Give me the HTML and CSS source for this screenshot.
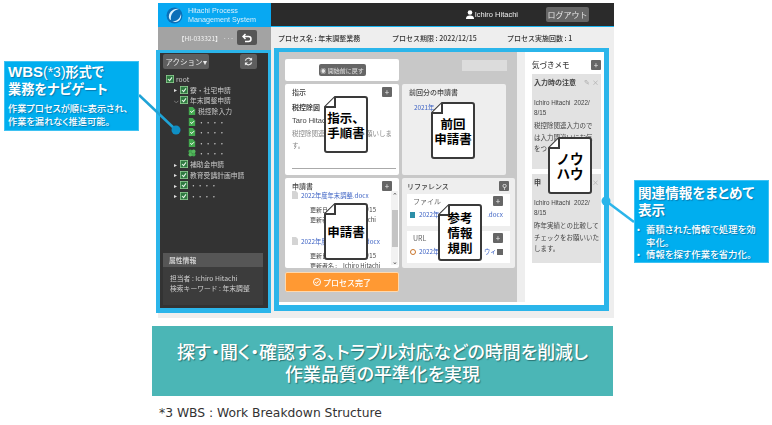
FILE: index.html
```html
<!doctype html>
<html lang="ja">
<head>
    <meta charset="UTF-8">
    <title>WBS</title>
    <link rel="stylesheet" href="styles.css">
</head>
<body>
<svg class="defs" width="0" height="0">
    <symbol id="folder" viewBox="0 0 10 10">
        <rect x="0.5" y="0.5" width="9" height="9" fill="#2f7a40" stroke="#8fd092" stroke-width="1"/>
        <path d="M2.5 5l2 2 3-4" fill="none" stroke="#e8f5e8" stroke-width="1.3"/>
    </symbol>
    <symbol id="page" viewBox="0 0 10 10">
        <path d="M1 0h5l3 3v7H1z" fill="#43a94f"/>
        <path d="M3 5l1.5 2 3-3" fill="none" stroke="#fff" stroke-width="1.2"/>
    </symbol>
    <symbol id="leaf" viewBox="0 0 10 10">
        <circle cx="3" cy="3" r="2.4" fill="#43a94f"/>
        <circle cx="7" cy="3" r="2.4" fill="#57b85f"/>
        <circle cx="3" cy="7" r="2.4" fill="#57b85f"/>
        <circle cx="7" cy="7" r="2.4" fill="#43a94f"/>
    </symbol>
    <symbol id="sheet" viewBox="0 0 44 57">
        <path d="M11 1H41q2 0 2 2V54q0 2-2 2H3q-2 0-2-2V11z" fill="#fff" stroke="#3a3a3a" stroke-width="2"/>
        <path d="M11 1V11H1" fill="#fff" stroke="#3a3a3a" stroke-width="2"/>
    </symbol>
    <symbol id="file" viewBox="0 0 6 8">
        <path d="M0 0h4l2 2v6H0z" fill="#d4d4d4"/>
    </symbol>
</svg>

<div class="page">
    <div class="app">
        <div class="left-col">
            <div class="brand">
                <svg class="brand-logo" width="17" height="17" viewBox="0 0 17 17">
                    <circle cx="8.5" cy="8.5" r="8" fill="#0b6fb8"/>
                    <path d="M3 11C2 6 7 1 13 2 8 3 4 7 5 13 4 13 3.500 12 3 11z" fill="#d9f2ff"/>
                    <path d="M6 14c4 1 8-2 9-7 1 5-3 10-9 7z" fill="#d9f2ff"/>
                </svg>
                <div class="brand-name">Hitachi Process<br>Management System</div>
            </div>
            <div class="case-bar">
                <span class="case-id">【HI-033321】 ···</span>
                <button class="back-btn">
                    <svg width="10" height="10" viewBox="0 0 10 10"><path d="M3.500 1L1 3.500 3.500 6M1.500 3.500H6.500a2.500 2.500 0 0 1 0 5H3" fill="none" stroke="#fff" stroke-width="1.500"/></svg>
                </button>
            </div>
            <div class="side">
                <div class="side-tools">
                    <button class="action-btn">アクション▾</button>
                    <button class="refresh-btn">
                        <svg width="9" height="9" viewBox="0 0 10 10"><path d="M1.500 4A3.600 3.600 0 0 1 8 3M8.500 6A3.600 3.600 0 0 1 2 7" fill="none" stroke="#eee" stroke-width="1.400"/><path d="M9 0.500V4H5.500zM1 9.500V6h3.500z" fill="#eee"/></svg>
                    </button>
                </div>
                <ul class="tree">
                    <li class="lv0"><svg class="ti"><use href="#folder"/></svg>root</li>
                    <li class="lv1"><i class="arrow">▸</i><svg class="ti"><use href="#folder"/></svg>寮・社宅申請</li>
                    <li class="lv1"><i class="arrow">⌵</i><svg class="ti"><use href="#folder"/></svg>年末調整申請</li>
                    <li class="lv2"><svg class="ti"><use href="#page"/></svg>税控除入力</li>
                    <li class="lv2"><svg class="ti"><use href="#page"/></svg>・・・・</li>
                    <li class="lv2"><svg class="ti"><use href="#page"/></svg>・・・・</li>
                    <li class="lv2"><svg class="ti"><use href="#page"/></svg>・・・・</li>
                    <li class="lv2"><svg class="ti"><use href="#leaf"/></svg>・・・・</li>
                    <li class="lv1"><i class="arrow">▸</i><svg class="ti"><use href="#folder"/></svg>補助金申請</li>
                    <li class="lv1"><i class="arrow">▸</i><svg class="ti"><use href="#folder"/></svg>教育受講計画申請</li>
                    <li class="lv1"><i class="arrow">▸</i><svg class="ti"><use href="#folder"/></svg>・・・・</li>
                    <li class="lv1"><i class="arrow">▸</i><svg class="ti"><use href="#folder"/></svg>・・・・</li>
                </ul>
                <div class="attr">
                    <div class="attr-head">属性情報</div>
                    <div class="attr-body">担当者 : Ichiro Hitachi<br>検索キーワード : 年末調整</div>
                </div>
            </div>
        </div>

        <div class="right-col">
            <div class="topbar">
                <span class="user">
                    <svg width="8" height="9" viewBox="0 0 8 9"><circle cx="4" cy="2.500" r="2.300" fill="#fff"/><path d="M0 9c0-3 2-3.500 4-3.500S8 6 8 9z" fill="#fff"/></svg>Ichiro Hitachi
                </span>
                <button class="logout">ログアウト</button>
            </div>
            <div class="procbar">
                <span class="proc-a">プロセス名 : 年末調整業務</span>
                <span class="proc-b">プロセス期限 : 2022/12/15</span>
                <span>プロセス実施回数 : 1</span>
            </div>
            <div class="main">
                <div class="board">
                    <div class="card back-card"><button class="restart">◉ 開始前に戻す</button></div>
                    <div class="ghost-cell"><div class="ghost"></div></div>

                    <div class="card">
                        <div class="card-head">指示<button class="plus">+</button></div>
                        <div class="task-name">税控除図</div>
                        <div class="task-user">Taro Hitac</div>
                        <div class="task-text split"><span>税控除関連</span><span>願いしま</span></div>
                        <div class="task-text">す。</div>
                        <div class="task-rule"></div>
                    </div>
                    <div class="card prev-card">
                        <div class="card-head">前回分の申請書</div>
                        <div class="link prev-link">2021年</div>
                    </div>

                    <div class="card form-card">
                        <div class="card-head">申請書<button class="plus">+</button></div>
                        <div class="form-wrap">
                            <div class="form-list">
                                <div class="link form-link"><svg class="fi"><use href="#file"/></svg>2022年度年末調整.docx</div>
                                <div class="meta split"><span>更新日</span><span>/15</span></div>
                                <div class="meta split"><span>更新者</span><span>chi</span></div>
                                <div class="link form-link link-next split"><span><svg class="fi"><use href="#file"/></svg>2022年度</span><span>.docx</span></div>
                                <div class="meta split"><span>更新日</span><span>/15</span></div>
                                <div class="meta">更新者名 :　Ichiro Hitachi</div>
                            </div>
                            <div class="scroll"><span>⌃</span><i class="thumb"></i><span>⌄</span></div>
                        </div>
                    </div>
                    <div class="card ref-card">
                        <div class="card-head">リファレンス<button class="plus search">⚲</button></div>
                        <div class="ref-box">
                            <div class="ref-title">ファイル<button class="plus">+</button></div>
                            <div class="link ref-link"><i class="dot-file"></i><span class="ref-a">2022年</span><span>.docx</span></div>
                        </div>
                        <div class="ref-box">
                            <div class="ref-title">URL<button class="plus">+</button></div>
                            <div class="link ref-link"><i class="dot-url"></i><span class="ref-a">2022年</span><span>ウィ</span><button class="mini"></button></div>
                        </div>
                    </div>

                    <button class="finish">
                        <svg width="8" height="8" viewBox="0 0 8 8"><circle cx="4" cy="4" r="3.500" fill="none" stroke="#fff"/><path d="M2.200 4l1.300 1.400 2.300-2.600" fill="none" stroke="#fff"/></svg>プロセス完了
                    </button>
                </div>
                <div class="strip"></div>
                <div class="memos">
                    <div class="memo-head">気づきメモ<button class="plus">+</button></div>
                    <div class="memo memo-one">
                        <div class="memo-title">入力時の注意<span class="memo-acts">✎ ×</span></div>
                        <div class="memo-by">Ichiro Hitachi&nbsp; 2022/<br>8/15</div>
                        <p class="memo-text">税控除関連入力ので<br>は入力間違いにお気<br>をつ</p>
                    </div>
                    <div class="memo memo-two">
                        <div class="memo-title">申<span class="memo-acts">×</span></div>
                        <div class="memo-by">Ichiro Hitachi&nbsp; 2022/<br>8/15</div>
                        <p class="memo-text">昨年実績との比較して<br>チェックをお願いいた<br>します。</p>
                    </div>
                </div>
            </div>
        </div>
    </div>

    <div class="banner">探す・聞く・確認する、トラブル対応などの時間を削減し<br>作業品質の平準化を実現</div>
    <div class="footnote">*3 WBS : Work Breakdown Structure</div>

    <!-- annotations over the screenshot -->
    <svg class="wires" width="772" height="425" viewBox="0 0 772 425">
        <path d="M139 95L176 130" stroke="#1fa3d6" stroke-width="2.500"/>
        <circle cx="176" cy="130" r="4.500" fill="#0f8fc4"/>
        <path d="M606 201L634 222" stroke="#2bb5ea" stroke-width="2.500"/>
        <circle cx="606" cy="201" r="4.500" fill="#2bb5ea"/>
    </svg>

    <div class="doc doc-guide"><svg><use href="#sheet"/></svg><b>指示、<br>手順書</b></div>
    <div class="doc doc-prev"><svg><use href="#sheet"/></svg><b>前回<br>申請書</b></div>
    <div class="doc doc-form"><svg><use href="#sheet"/></svg><b>申請書</b></div>
    <div class="doc doc-ref"><svg><use href="#sheet"/></svg><b>参考<br>情報<br>規則</b></div>
    <div class="doc doc-know"><svg><use href="#sheet"/></svg><b>ノウ<br>ハウ</b></div>

    <div class="callout callout-wbs">
        <div class="callout-title"><span class="latin">WBS</span><small>(*3)</small>形式で<br>業務をナビゲート</div>
        <p class="callout-text">作業プロセスが順に表示され、<br>作業を漏れなく推進可能。</p>
    </div>
    <div class="callout callout-info">
        <div class="callout-title">関連情報をまとめて<br>表示</div>
        <ul class="callout-list">
            <li>蓄積された情報で処理を効<br>率化。</li>
            <li>情報を探す作業を省力化。</li>
        </ul>
    </div>
</div>
</body>
</html>
```

FILE: styles.css
```css
html , body
{
    margin : 0px ;
    padding : 0px ;
    background : #fff ;
    font-family : "Noto Sans CJK JP" , "Liberation Sans" , sans-serif ;
}
button
{
    margin : 0px ;
    padding : 0px ;
    border : none ;
    font-family : inherit ;
}
ul , p
{
    margin : 0px ;
    padding : 0px ;
    list-style : none ;
}
.defs
{
    position : absolute ;
}
.page
{
    position : relative ;
    width : 772px ;
    height : 425px ;
    overflow : hidden ;
    padding-top : 3px ;
    box-sizing : border-box ;
}
.split
{
    display : flex ;
    justify-content : space-between ;
}

/* app screenshot */
.app
{
    display : flex ;
    width : 456px ;
    height : 315px ;
    margin-left : 158px ;
    background : #eee ;
    filter : blur(0.4px) ;
}
.left-col
{
    width : 113px ;
    flex : none ;
}
.right-col
{
    flex : 1 ;
    min-width : 0 ;
}
.brand
{
    display : flex ;
    align-items : center ;
    gap : 5px ;
    height : 24px ;
    padding-left : 8px ;
    background : #08a8f2 ;
}
.brand-logo
{
    flex : none ;
}
.brand-name
{
    color : #d8eefa ;
    font : 7.2px/9.5px "Liberation Sans" , sans-serif ;
}
.case-bar
{
    display : flex ;
    align-items : center ;
    justify-content : space-between ;
    height : 23px ;
    padding : 0 14px 2px 20px ;
    box-sizing : border-box ;
    background : #a3a3a3 ;
}
.case-id
{
    color : #f4f4f4 ;
    font-size : 6.5px ;
}
.back-btn
{
    display : flex ;
    align-items : center ;
    justify-content : center ;
    width : 20px ;
    height : 15px ;
    border-radius : 2px ;
    background : #555 ;
}

/* left tree */
.side
{
    display : flex ;
    flex-direction : column ;
    width : 108px ;
    height : 255px ;
    margin-left : -2px ;
    border : solid #2bb5ea ;
    border-width : 3px 3px 5px 4px ;
    background : #333 ;
}
.side-tools
{
    display : flex ;
    justify-content : space-between ;
    padding : 1px 11px 0 3px ;
}
.action-btn
{
    width : 46px ;
    height : 15px ;
    border-radius : 2px ;
    background : #5e5e5e ;
    color : #e8e8e8 ;
    font-size : 7.5px ;
}
.refresh-btn
{
    display : flex ;
    align-items : center ;
    justify-content : center ;
    width : 17px ;
    height : 15px ;
    border-radius : 2px ;
    background : #5e5e5e ;
}
.tree
{
    padding-top : 5px ;
    color : #c9c9c9 ;
    font-size : 6.8px ;
}
.tree li
{
    display : flex ;
    align-items : center ;
    height : 10.6px ;
    white-space : nowrap ;
}
.lv0
{
    padding-left : 6px ;
}
.lv1
{
    padding-left : 14px ;
}
.lv2
{
    padding-left : 28px ;
}
.arrow
{
    width : 6px ;
    color : #ddd ;
    font-style : normal ;
    font-size : 6px ;
}
.ti
{
    flex : none ;
    width : 8px ;
    height : 8px ;
    margin-right : 2px ;
}
.attr
{
    margin : auto 5px 3px 3px ;
    height : 52px ;
    background : #3c3c3c ;
    color : #cfcfcf ;
    font-size : 6.8px ;
}
.attr-head
{
    height : 14px ;
    padding-left : 6px ;
    background : #565656 ;
    line-height : 14px ;
    font-weight : 700 ;
}
.attr-body
{
    padding : 6px 0 0 7px ;
    line-height : 10px ;
}

/* top bars */
.topbar
{
    display : flex ;
    align-items : center ;
    justify-content : flex-end ;
    height : 23px ;
    padding-right : 25px ;
    background : #2b2b2b ;
    border-bottom : 1px solid #19b4f0 ;
}
.user
{
    display : flex ;
    align-items : center ;
    gap : 1px ;
    margin-right : 28px ;
    color : #eee ;
    font : 7.5px "Liberation Sans" , sans-serif ;
}
.logout
{
    width : 43px ;
    height : 15px ;
    border-radius : 2px ;
    background : #666 ;
    color : #e6e6e6 ;
    font-size : 8px ;
}
.procbar
{
    display : flex ;
    align-items : center ;
    height : 21px ;
    padding-left : 7px ;
    color : #333 ;
    font-size : 7px ;
    font-weight : 500 ;
}
.proc-a
{
    width : 114px ;
}
.proc-b
{
    width : 115px ;
}

/* main outlined area */
.main
{
    display : flex ;
    width : 325px ;
    height : 253px ;
    margin-left : 3px ;
    border : solid #2bb5ea ;
    border-width : 4px 5px 6px 5px ;
    background : #fff ;
}
.board
{
    display : grid ;
    grid-template-columns : 114px 113px ;
    grid-template-rows : 22px 91px 90px 20px ;
    column-gap : 3px ;
    row-gap : 3px ;
    width : 244px ;
    height : 250px ;
    padding : 7px 0 0 6px ;
    box-sizing : border-box ;
    background : #c8c8c8 ;
    font-size : 7px ;
    color : #444 ;
}
.card
{
    position : relative ;
    min-width : 0 ;
    padding : 3px 7px ;
    box-sizing : border-box ;
    border-radius : 2px ;
    background : #fff ;
}
.card-head
{
    display : flex ;
    justify-content : space-between ;
    align-items : center ;
    height : 10px ;
    font-weight : 500 ;
}
.plus
{
    width : 10px ;
    height : 10px ;
    border-radius : 1px ;
    background : #666 ;
    color : #eee ;
    font-size : 8px ;
    line-height : 10px ;
}
.back-card
{
    display : flex ;
    align-items : center ;
    justify-content : center ;
}
.restart
{
    width : 47px ;
    height : 12px ;
    border-radius : 2px ;
    background : #666 ;
    color : #e4e4e4 ;
    font-size : 6px ;
    white-space : nowrap ;
}
.ghost-cell
{
    display : flex ;
    justify-content : flex-end ;
    padding-right : 8px ;
}
.ghost
{
    width : 45px ;
    height : 11px ;
    margin-top : 1px ;
    background : #dcdcdc ;
}
.task-name
{
    margin-top : 5px ;
    font-weight : 700 ;
}
.task-user
{
    margin-top : 4px ;
    font : 7.5px "Liberation Sans" , sans-serif ;
}
.task-text
{
    margin-top : 4px ;
    color : #888 ;
    line-height : 8px ;
    font-size : 6.5px ;
}
.task-rule
{
    position : absolute ;
    left : 7px ;
    right : 3px ;
    bottom : 6px ;
    border-top : 1px solid #aaa ;
}
.prev-card
{
    width : 104px ;
    background : #eee ;
}
.link
{
    color : #3c62c4 ;
    font-size : 6.3px ;
    white-space : nowrap ;
}
.prev-link
{
    margin : 6px 0 0 5px ;
}
.form-card
{
    padding-right : 1px ;
    padding-bottom : 0 ;
    overflow : hidden ;
}
.form-wrap
{
    display : flex ;
    justify-content : space-between ;
}
.form-card .card-head
{
    padding-right : 6px ;
}
.form-list
{
    width : 89px ;
}
.form-link
{
    margin-bottom : 5px ;
    line-height : 9px ;
}
.fi
{
    width : 6px ;
    height : 8px ;
    margin-right : 3px ;
    vertical-align : -1px ;
}
.link-next
{
    margin-top : 13px ;
    width : 88px ;
}
.meta
{
    width : 66px ;
    margin-left : 18px ;
    color : #444 ;
    font-size : 6px ;
    line-height : 9.5px ;
    white-space : nowrap ;
}
.scroll
{
    display : flex ;
    flex-direction : column ;
    align-items : center ;
    justify-content : space-between ;
    flex : none ;
    width : 7px ;
    height : 74px ;
    background : #f2f2f2 ;
    color : #444 ;
    font-size : 7px ;
    line-height : 8px ;
}
.thumb
{
    width : 6px ;
    height : 37px ;
    background : #c4c4c4 ;
}
.ref-card
{
    padding : 3px 5px ;
    background : #eee ;
}
.ref-card .plus.search
{
    margin-right : 1px ;
    font-size : 7px ;
}
.ref-box
{
    margin-top : 3px ;
    height : 32px ;
    padding : 2px 7px 0 6px ;
    box-sizing : border-box ;
    background : #fff ;
}
.ref-box + .ref-box
{
    margin-top : 5px ;
}
.ref-title
{
    display : flex ;
    justify-content : space-between ;
    align-items : center ;
    height : 10px ;
    margin-bottom : 4px ;
    color : #666 ;
}
.ref-link
{
    display : flex ;
    align-items : center ;
    margin-left : -3px ;
}
.ref-a
{
    width : 70px ;
}
.dot-file
{
    flex : none ;
    width : 5px ;
    height : 6px ;
    margin-right : 4px ;
    background : #2c8fa8 ;
}
.dot-url
{
    flex : none ;
    width : 6px ;
    height : 6px ;
    margin-right : 3px ;
    border-radius : 50% ;
    border : 1.500px solid #c9742a ;
    box-sizing : border-box ;
}
.mini
{
    width : 7px ;
    height : 6px ;
    margin-left : auto ;
    background : #666 ;
}
.finish
{
    display : flex ;
    align-items : center ;
    justify-content : center ;
    gap : 2px ;
    height : 20px ;
    margin-top : 1px ;
    border : 1px solid #ffd8ac ;
    border-radius : 2px ;
    background : #ff9933 ;
    color : #fff ;
    font-size : 8px ;
    font-weight : 500 ;
}
.strip
{
    width : 8px ;
    height : 250px ;
    background : #eee ;
}
.memos
{
    flex : 1 ;
    padding : 7px 3px 0 7px ;
    font-size : 6.5px ;
    color : #444 ;
}
.memo-head
{
    display : flex ;
    justify-content : space-between ;
    align-items : center ;
    height : 11px ;
    margin-bottom : 4px ;
    font-size : 7.5px ;
    font-weight : 500 ;
}
.memo
{
    padding : 3px 2px 0 2px ;
    background : #e2e2e2 ;
    overflow : hidden ;
}
.memo-one
{
    height : 92px ;
}
.memo-two
{
    height : 86px ;
    margin-top : 5px ;
}
.memo-title
{
    display : flex ;
    justify-content : space-between ;
    font-weight : 700 ;
    font-size : 7px ;
}
.memo-acts
{
    color : #aaa ;
    font-weight : 400 ;
}
.memo-by
{
    margin-top : 11px ;
    font : 6.3px/10px "Liberation Sans" , sans-serif ;
}
.memo-text
{
    margin-top : 2px ;
    line-height : 11.5px ;
    font-size : 6.5px ;
    white-space : nowrap ;
}

/* lower part */
.banner
{
    width : 461px ;
    height : 70px ;
    margin : 8px 0 0 152px ;
    padding-top : 14px ;
    box-sizing : border-box ;
    background : #4bb6b6 ;
    color : #fff ;
    text-align : center ;
    font-size : 17.9px ;
    font-weight : 500 ;
    font-feature-settings : "palt" ;
    line-height : 22px ;
    white-space : nowrap ;
    text-shadow : 1px 1px 1px #2a7474 ;
}
.footnote
{
    margin : 10px 0 0 159px ;
    color : #333 ;
    font : 12.3px "DejaVu Sans" , sans-serif ;
}

/* overlays */
.wires
{
    position : absolute ;
    left : 0 ;
    top : 0 ;
}
.doc
{
    position : absolute ;
    display : flex ;
    align-items : center ;
    justify-content : center ;
    width : 44px ;
    height : 57px ;
    color : #000 ;
    text-align : center ;
    font-size : 12.5px ;
    line-height : 15px ;
}
.doc svg
{
    position : absolute ;
    left : 0 ;
    top : 0 ;
    width : 100% ;
    height : 100% ;
}
.doc b
{
    position : relative ;
    white-space : nowrap ;
}
.doc-guide
{
    left : 324px ;
    top : 96px ;
}
.doc-prev
{
    left : 431px ;
    top : 102px ;
}
.doc-form
{
    left : 324px ;
    top : 203px ;
}
.doc-ref
{
    left : 438px ;
    top : 204px ;
}
.doc-know
{
    left : 548px ;
    top : 137px ;
    font-size : 13.5px ;
}
.callout
{
    position : absolute ;
    box-sizing : border-box ;
    width : 135px ;
    background : #00aeef ;
    border : 1px solid #3fc2f2 ;
    color : #fff ;
    font-feature-settings : "palt" ;
    text-shadow : 1px 1px 1px rgba(10 , 100 , 150 , 0.7) ;
}
.callout-wbs
{
    left : 4px ;
    top : 61px ;
    height : 70px ;
    padding : 1px 2px 0 3px ;
}
.callout-info
{
    left : 634px ;
    top : 180px ;
    height : 83px ;
    padding : 3px 2px 0 3px ;
}
.callout-title
{
    font-size : 13.2px ;
    font-weight : 700 ;
    line-height : 17px ;
    white-space : nowrap ;
}
.callout-info .callout-title
{
    font-size : 13.6px ;
}
.latin
{
    font : 700 15px "Liberation Sans" , sans-serif ;
}
.callout-title small
{
    font : 400 14px "Liberation Sans" , sans-serif ;
}
.callout-text
{
    margin-top : 5px ;
    font-size : 9.2px ;
    line-height : 12.5px ;
    font-weight : 500 ;
    white-space : nowrap ;
}
.callout-list
{
    margin-top : 5px ;
    font-size : 9.4px ;
    line-height : 12.5px ;
    font-weight : 500 ;
    white-space : nowrap ;
}
.callout-list li
{
    padding-left : 8px ;
    position : relative ;
}
.callout-list li:before
{
    content : "・" ;
    position : absolute ;
    left : -2px ;
    top : 0 ;
}
```
